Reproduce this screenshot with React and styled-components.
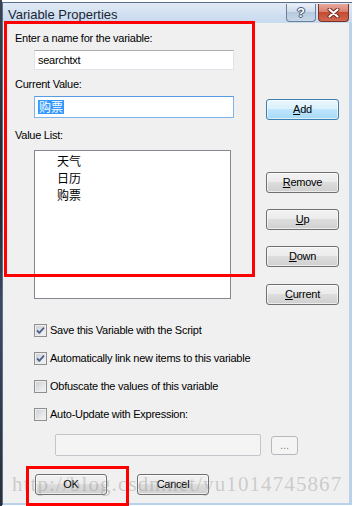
import React from "react";
import styled, { createGlobalStyle, css } from "styled-components";

const Global = createGlobalStyle`
  html, body { margin: 0; padding: 0; background: #ffffff; }
  body { font-family: "Liberation Sans", Arial, sans-serif; }
`;

const Page = styled.div`
  position: relative;
  width: 354px;
  height: 506px;
  overflow: hidden;
  display: flex;
  align-items: flex-start;
  background: #ffffff;
`;

const DesktopStrip = styled.div`
  width: 2px;
  height: 506px;
  background: linear-gradient(#3a4350, #22262c 40%, #3b4a66 60%, #2a2f36);
`;

const Window = styled.div`
  margin-top: 2px;
  width: 349px;
  display: flex;
  flex-direction: column;
  border-top: 1px solid #5b6f8c;
  border-left: 1px solid #5b6f8c;
  background: #b9d1ea;
`;

const TitleBar = styled.div`
  height: 20px;
  display: flex;
  align-items: flex-start;
  padding: 0 3px 0 5px;
  background: linear-gradient(#e1eaf5, #d3e1f1 50%, #c8daef);
`;

const Title = styled.div`
  flex: 1;
  font-size: 13px;
  line-height: 20px;
  margin-top: 2px;
  color: #1b2635;
`;

const CaptionButtons = styled.div`
  display: flex;
  gap: 2px;
  margin-top: 1px;
`;

const CaptionButton = styled.div`
  height: 18px;
  box-sizing: border-box;
  border: 1px solid #6d7f99;
  border-top: none;
  border-radius: 0 0 4px 4px;
  display: flex;
  align-items: center;
  justify-content: center;
  ${(p) =>
    p.$close
      ? css`
          width: 31px;
          border-color: #7a3328;
          background: linear-gradient(#e8a99c, #d8806f 45%, #c44a34 50%, #d0684f);
        `
      : css`
          width: 30px;
          background: linear-gradient(#e9f0f8, #cfdcec 45%, #b7c9de 50%, #c8d8ea);
        `}
`;

const HelpGlyph = styled.span`
  font-family: "Liberation Sans", Arial, sans-serif;
  font-weight: bold;
  font-size: 13px;
  line-height: 13px;
  color: #ffffff;
  text-shadow: 0 0 1px #2d4060, 0 0 1px #2d4060, 1px 0 0 #4c6283, -1px 0 0 #4c6283,
    0 1px 0 #4c6283, 0 -1px 0 #4c6283;
`;

const Content = styled.div`
  width: 346px;
  height: 480px;
  margin: 0 2px 2px 0;
  box-sizing: border-box;
  background: #f0f0f0;
  padding: 9px 0 0 12px;
  display: flex;
  flex-direction: column;
  font-size: 11px;
  letter-spacing: -0.25px;
  color: #000;
`;

const TopSection = styled.div`
  display: flex;
  align-items: flex-start;
`;

const LeftColumn = styled.div`
  width: 251px;
  display: flex;
  flex-direction: column;
`;

const RightColumn = styled.div`
  display: flex;
  flex-direction: column;
  padding-top: 67px;
`;

const Label = styled.div`
  line-height: 13px;
  height: 13px;
  margin-top: ${(p) => p.$mt || 0}px;
`;

const TextBox = styled.div`
  box-sizing: border-box;
  margin-left: 19px;
  width: 200px;
  height: ${(p) => p.$h}px;
  margin-top: ${(p) => p.$mt}px;
  background: #ffffff;
  border: 1px solid #e2e3ea;
  border-top-color: #abadb3;
  padding-left: 3px;
  display: flex;
  align-items: center;
  ${(p) =>
    p.$focused &&
    css`
      border-color: #7eb4ea;
      border-top-color: #569de5;
    `}
`;

const Selected = styled.span`
  background: #3399ff;
  color: #ffffff;
  font-family: "Noto Sans CJK SC", sans-serif;
  font-size: 12px;
  line-height: 14px;
  letter-spacing: 0;
  padding: 0 1px;
`;

const ListBox = styled.div`
  box-sizing: border-box;
  margin: 8px 0 0 19px;
  width: 197px;
  height: 149px;
  background: #ffffff;
  border: 1px solid #828790;
  padding: 1px 0 0 22px;
`;

const ListItem = styled.div`
  font-family: "Noto Sans CJK SC", sans-serif;
  font-size: 12px;
  line-height: 17px;
  letter-spacing: 0;
`;

const Button = styled.div`
  box-sizing: border-box;
  width: ${(p) => p.$w || 73}px;
  height: 21px;
  margin-top: ${(p) => p.$mt || 0}px;
  margin-left: ${(p) => p.$ml || 0}px;
  border: 1px solid #707070;
  border-radius: 3px;
  background: linear-gradient(#f2f2f2, #ebebeb 50%, #dddddd 50%, #cfcfcf);
  box-shadow: inset 0 0 0 1px rgba(255, 255, 255, 0.6);
  display: flex;
  align-items: center;
  justify-content: center;
  font-size: 11px;
  line-height: 13px;
  color: #000;
  ${(p) =>
    p.$default &&
    css`
      border-color: #3c7fb1;
      background: linear-gradient(#eaf6fd, #d9f0fc 50%, #bee6fd 50%, #a7d9f5);
    `}
`;

const Checks = styled.div`
  margin: 19px 0 0 19px;
  display: flex;
  flex-direction: column;
  gap: 15px;
`;

const CheckRow = styled.div`
  display: flex;
  align-items: center;
  height: 13px;
  gap: 3px;
  line-height: 13px;
`;

const ExprRow = styled.div`
  margin: 13px 0 0 40px;
  display: flex;
  align-items: center;
  gap: 10px;
`;

const ExprBox = styled.div`
  box-sizing: border-box;
  width: 206px;
  height: 22px;
  border: 1px solid #c2c5c9;
  border-radius: 2px;
  background: #f4f4f4;
`;

const DotsButton = styled.div`
  box-sizing: border-box;
  width: 27px;
  height: 19px;
  border: 1px solid #b5b8bc;
  border-radius: 3px;
  background: #f4f4f4;
  color: #8a8a8a;
  font-size: 11px;
  display: flex;
  align-items: center;
  justify-content: center;
  letter-spacing: 0;
`;

const BottomRow = styled.div`
  margin: 18px 0 0 20px;
  display: flex;
`;

const Annotation = styled.div`
  position: absolute;
  box-sizing: border-box;
  border: 3px solid #ff0000;
  left: ${(p) => p.$x}px;
  top: ${(p) => p.$y}px;
  width: ${(p) => p.$w}px;
  height: ${(p) => p.$h}px;
  pointer-events: none;
`;

const Watermark = styled.div`
  position: absolute;
  left: 12px;
  top: 474px;
  font-family: "Liberation Serif", "Times New Roman", serif;
  font-size: 21px;
  line-height: 21px;
  letter-spacing: 1.1px;
  color: rgba(150, 150, 150, 0.42);
  white-space: nowrap;
  pointer-events: none;
`;

function CheckBox({ checked }) {
  return (
    <svg width="13" height="13" viewBox="0 0 13 13">
      <defs>
        <linearGradient id="cbg" x1="0" y1="0" x2="1" y2="1">
          <stop offset="0" stopColor="#cbcfd5" />
          <stop offset="1" stopColor="#f7f7f7" />
        </linearGradient>
      </defs>
      <rect x="0.5" y="0.5" width="12" height="12" fill="#f4f4f4" stroke="#8e8f8f" />
      <rect x="2" y="2" width="9" height="9" fill="url(#cbg)" stroke="#dcdcdc" strokeWidth="0.5" />
      {checked && (
        <path
          d="M3 6.3 L5.3 8.8 L10 3.6"
          fill="none"
          stroke="#4a5f8f"
          strokeWidth="1.8"
          strokeLinejoin="round"
        />
      )}
    </svg>
  );
}

function CloseGlyph() {
  return (
    <svg width="13" height="10" viewBox="0 0 13 10">
      <path d="M2.5 1.5 L10.5 8.5 M10.5 1.5 L2.5 8.5" stroke="#6b2419" strokeWidth="4" strokeLinecap="round" />
      <path d="M2.5 1.5 L10.5 8.5 M10.5 1.5 L2.5 8.5" stroke="#ffffff" strokeWidth="2.2" strokeLinecap="round" />
    </svg>
  );
}

export default function App() {
  return (
    <Page>
      <Global />
      <DesktopStrip />
      <Window>
        <TitleBar>
          <Title>Variable Properties</Title>
          <CaptionButtons>
            <CaptionButton>
              <HelpGlyph>?</HelpGlyph>
            </CaptionButton>
            <CaptionButton $close>
              <CloseGlyph />
            </CaptionButton>
          </CaptionButtons>
        </TitleBar>
        <Content>
          <TopSection>
            <LeftColumn>
              <Label>Enter a name for the variable:</Label>
              <TextBox $h={20} $mt={5}>searchtxt</TextBox>
              <Label $mt={8}>Current Value:</Label>
              <TextBox $h={22} $mt={5} $focused>
                <Selected>购票</Selected>
              </TextBox>
              <Label $mt={11}>Value List:</Label>
              <ListBox>
                <ListItem>天气</ListItem>
                <ListItem>日历</ListItem>
                <ListItem>购票</ListItem>
              </ListBox>
            </LeftColumn>
            <RightColumn>
              <Button $default>
                <span><u>A</u>dd</span>
              </Button>
              <Button $mt={52}>
                <span><u>R</u>emove</span>
              </Button>
              <Button $mt={16}>
                <span><u>U</u>p</span>
              </Button>
              <Button $mt={16}>
                <span><u>D</u>own</span>
              </Button>
              <Button $mt={17}>
                <span><u>C</u>urrent</span>
              </Button>
            </RightColumn>
          </TopSection>
          <Checks>
            <CheckRow>
              <CheckBox checked />
              <span>Save this Variable with the Script</span>
            </CheckRow>
            <CheckRow>
              <CheckBox checked />
              <span>Automatically link new items to this variable</span>
            </CheckRow>
            <CheckRow>
              <CheckBox />
              <span>Obfuscate the values of this variable</span>
            </CheckRow>
            <CheckRow>
              <CheckBox />
              <span>Auto-Update with Expression:</span>
            </CheckRow>
          </Checks>
          <ExprRow>
            <ExprBox />
            <DotsButton>...</DotsButton>
          </ExprRow>
          <BottomRow>
            <Button $w={72}>OK</Button>
            <Button $w={72} $ml={30}>Cancel</Button>
          </BottomRow>
        </Content>
      </Window>
      <Watermark>http://blog.csdn.net/yu1014745867</Watermark>
      <Annotation $x={4} $y={21} $w={251} $h={256} />
      <Annotation $x={26} $y={466} $w={103} $h={40} />
    </Page>
  );
}
